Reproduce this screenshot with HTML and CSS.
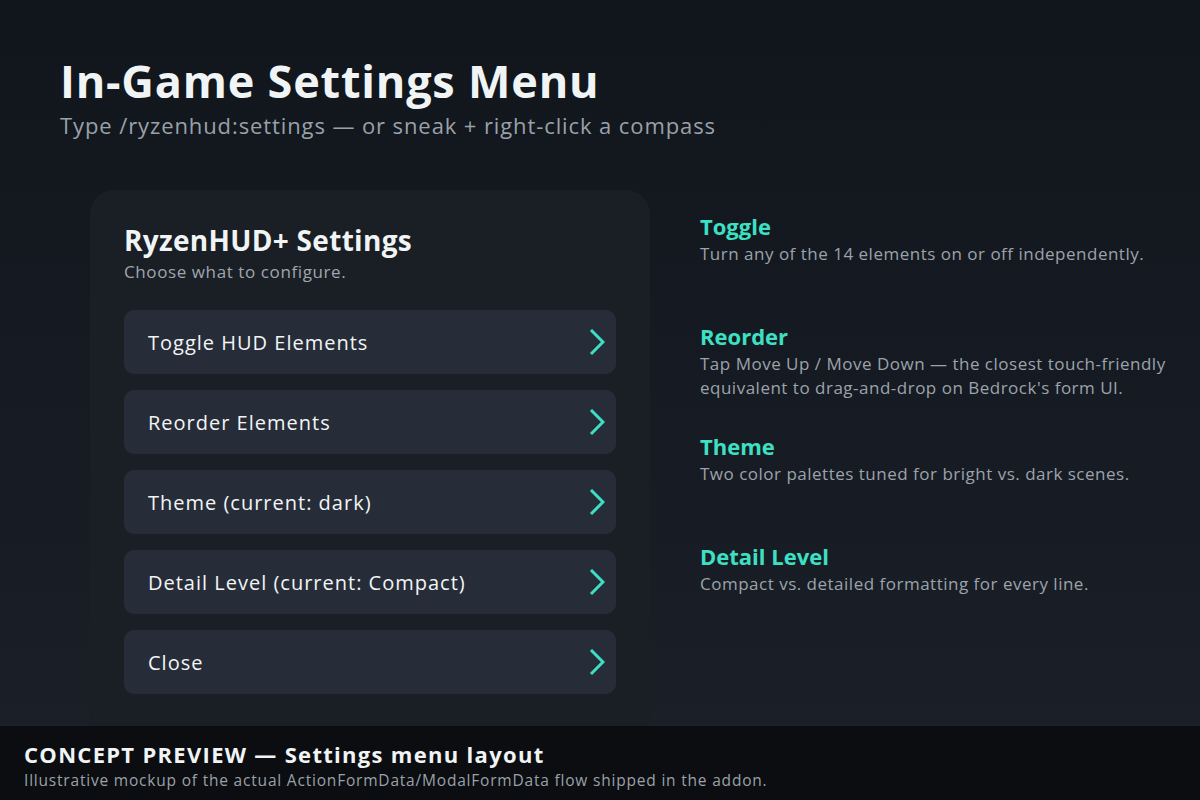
FILE: index.html
```html
<!DOCTYPE html>
<html lang="en">
<head>
    <meta charset="UTF-8">
    <meta name="viewport" content="width=device-width, initial-scale=1.0">
    <title>In-Game Settings Menu</title>
    <link rel="stylesheet" href="styles.css">
</head>
<body>
    <header class="page-header">
        <h1>In-Game Settings Menu</h1>
        <p class="lead">Type /ryzenhud:settings — or sneak + right-click a compass</p>
    </header>

    <main class="layout">
        <!-- Mock of the settings form -->
        <section class="panel">
            <h2>RyzenHUD+ Settings</h2>
            <p class="panel-sub">Choose what to configure.</p>
            <div class="options">
                <div class="option">
                    <span>Toggle HUD Elements</span>
                    <svg class="chev" viewBox="0 0 16 28"><polyline points="2,2 14,14 2,26"/></svg>
                </div>
                <div class="option">
                    <span>Reorder Elements</span>
                    <svg class="chev" viewBox="0 0 16 28"><polyline points="2,2 14,14 2,26"/></svg>
                </div>
                <div class="option">
                    <span>Theme (current: dark)</span>
                    <svg class="chev" viewBox="0 0 16 28"><polyline points="2,2 14,14 2,26"/></svg>
                </div>
                <div class="option">
                    <span>Detail Level (current: Compact)</span>
                    <svg class="chev" viewBox="0 0 16 28"><polyline points="2,2 14,14 2,26"/></svg>
                </div>
                <div class="option">
                    <span>Close</span>
                    <svg class="chev" viewBox="0 0 16 28"><polyline points="2,2 14,14 2,26"/></svg>
                </div>
            </div>
        </section>

        <!-- Notes for each option -->
        <section class="notes">
            <div class="note">
                <h3>Toggle</h3>
                <p>Turn any of the 14 elements on or off independently.</p>
            </div>
            <div class="note">
                <h3>Reorder</h3>
                <p>Tap Move Up / Move Down — the closest touch-friendly equivalent to drag-and-drop on Bedrock's form UI.</p>
            </div>
            <div class="note">
                <h3>Theme</h3>
                <p>Two color palettes tuned for bright vs. dark scenes.</p>
            </div>
            <div class="note">
                <h3>Detail Level</h3>
                <p>Compact vs. detailed formatting for every line.</p>
            </div>
        </section>
    </main>

    <footer class="footer">
        <div class="footer-title">CONCEPT PREVIEW — Settings menu layout</div>
        <div class="footer-sub">Illustrative mockup of the actual ActionFormData/ModalFormData flow shipped in the addon.</div>
    </footer>
</body>
</html>
```

FILE: styles.css
```css
/* Page */
html, body {
    margin: 0;
    height: 800px;
    overflow: hidden;
}

body {
    position: relative;
    font-family: "Open Sans", "Noto Sans", sans-serif;
    color: #eef2f4;
    background: linear-gradient(180deg, #11151c 0%, #1b2029 100%);
}

h1, h2, h3, p {
    margin: 0;
}

/* Header */
.page-header {
    padding: 53px 60px 0 60px;
}

.page-header h1 {
    font-size: 45px;
    line-height: 56px;
    font-weight: 700;
    letter-spacing: 0.8px;
    color: #f0f4f5;
}

.lead {
    margin-top: 1px;
    font-size: 22px;
    line-height: 30px;
    letter-spacing: 0.9px;
    color: #9aa1a9;
}

/* Two columns */
.layout {
    display: flex;
    gap: 50px;
    margin-top: 50px;
    padding-left: 90px;
}

.panel {
    width: 492px;
    padding: 32px 34px 40px 34px;
    background-color: #1a1e25;
    border-radius: 24px;
}

.panel h2 {
    font-size: 28px;
    line-height: 36px;
    font-weight: 700;
    letter-spacing: 0.3px;
    color: #f0f4f5;
}

.panel-sub {
    margin-top: 2px;
    font-size: 17px;
    line-height: 24px;
    letter-spacing: 0.6px;
    color: #a0a6ae;
}

.options {
    display: flex;
    flex-direction: column;
    gap: 16px;
    margin-top: 26px;
}

.option {
    display: flex;
    align-items: center;
    justify-content: space-between;
    height: 64px;
    padding: 0 11px 0 24px;
    background-color: #272d38;
    border-radius: 10px;
    font-size: 20px;
    font-weight: 500;
    letter-spacing: 1px;
    color: #f2f5f6;
}

.chev {
    width: 16px;
    height: 28px;
}

.chev polyline {
    fill: none;
    stroke: #3ee0c4;
    stroke-width: 3;
}

/* Notes column */
.notes {
    padding-top: 22px;
    width: 470px;
}

.note {
    height: 110px;
}

.note h3 {
    font-size: 22px;
    line-height: 28px;
    font-weight: 700;
    color: #3ee0c4;
}

.note p {
    margin-top: 2px;
    font-size: 17px;
    line-height: 24px;
    letter-spacing: 0.5px;
    color: #9ca3ab;
}

/* Footer bar */
.footer {
    position: absolute;
    left: 0;
    right: 0;
    bottom: 0;
    height: 74px;
    padding: 13px 24px 0 24px;
    box-sizing: border-box;
    background-color: #0b0d10;
}

.footer-title {
    font-size: 22px;
    line-height: 30px;
    font-weight: 700;
    letter-spacing: 1.3px;
    color: #f0f4f5;
}

.footer-sub {
    font-size: 15.5px;
    line-height: 22px;
    letter-spacing: 0.8px;
    color: #9aa1a9;
}
```
